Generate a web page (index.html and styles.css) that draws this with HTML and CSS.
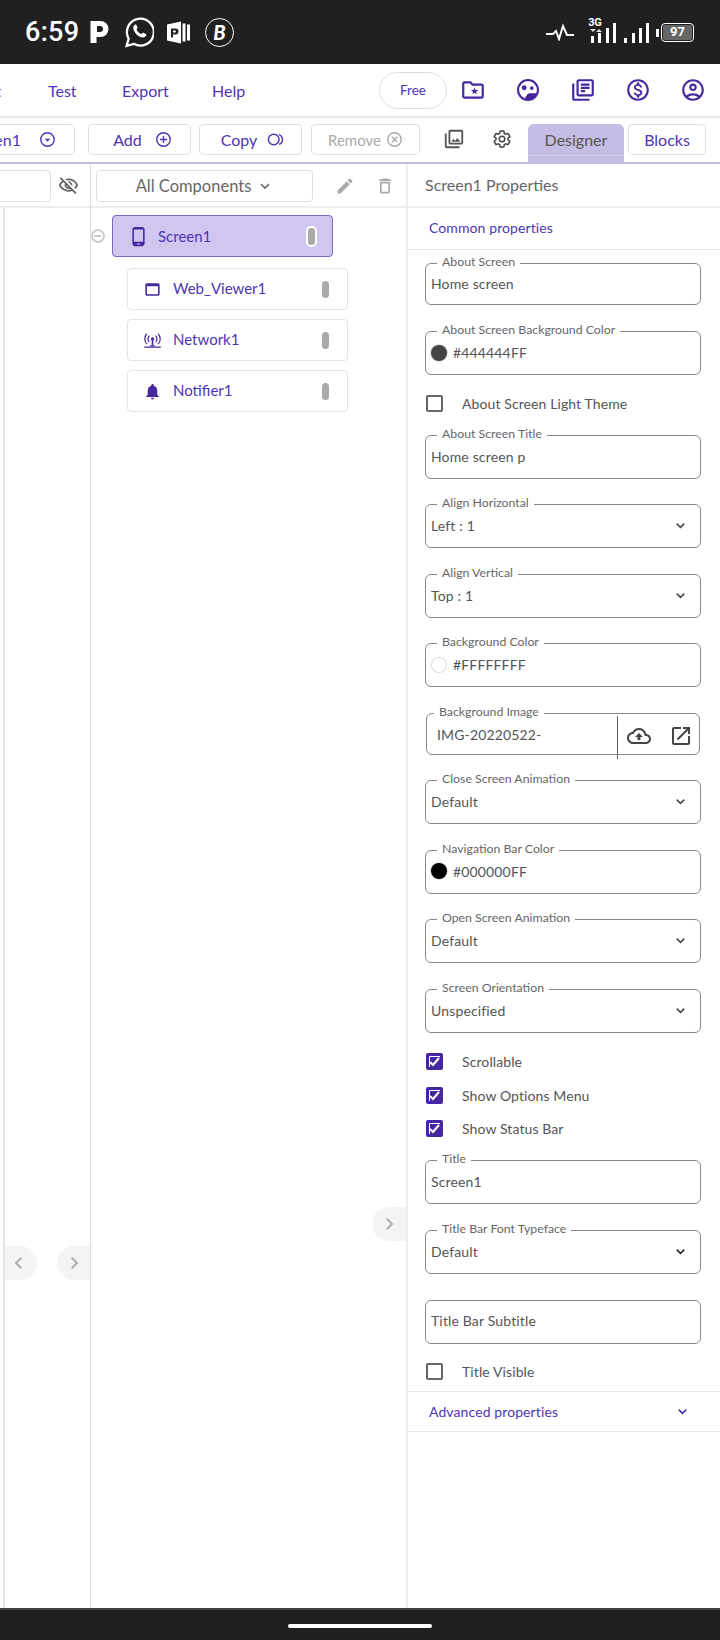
FILE: index.html
```html
<!DOCTYPE html>
<html lang="en">
<head>
<meta charset="utf-8">
<title>Screen1 Properties</title>
<link rel="stylesheet" href="styles.css">
</head>
<body>
<div class="statusbar">
  <span class="time">6:59</span>
  <svg class="st-p" viewBox="0 0 18 24"><path d="M0 2h10a8 8 0 0 1 0 16H6v6H0z M6.500 7v6h3a3 3 0 0 0 0-6z" fill-rule="evenodd"/></svg>
  <svg class="st-wa" viewBox="0 0 28 30"><path d="M1.500 28l2-7A13 13 0 1 1 8.500 26z" fill="none" stroke="#fff" stroke-width="2.200"/><path d="M9.500 7.500c-1.500 1-2 3-1 5.500 1.500 3 4 5.500 7 6.500 2.500.8 4.200 0 5-1.500.3-.7.2-1.200-.3-1.500l-2.500-1.300c-.5-.2-.8 0-1.200.5l-.7.9c-2-.7-4-2.700-4.800-4.700l.8-.8c.4-.4.4-.7.2-1.200l-1-2.200c-.3-.6-.9-.7-1.500-.2z" fill="#fff"/></svg>
  <svg class="st-ppt" viewBox="0 0 24 24"><path d="M0 4l14-3v22l-14-3z M4 8v9h2v-3h2.500a3 3 0 0 0 0-6z M6 10h2a1 1 0 0 1 0 2h-2z" fill-rule="evenodd"/><rect x="15.500" y="3" width="3" height="18"/><rect x="20" y="4" width="3" height="16"/></svg>
  <span class="st-b">B</span>
  <div class="st-right">
    <svg class="st-pulse" viewBox="0 0 28 16"><path d="M0 10h7l3-3 3 8 4-13 4 9h7" fill="none" stroke="#fff" stroke-width="2"/></svg>
    <div class="net">
      <span class="net-label">3G</span>
      <span class="net-arrows"></span>
      <span class="bars b1"><i></i><i></i><i></i><i></i></span>
    </div>
    <span class="bars b2"><i></i><i></i><i></i><i></i><i></i></span>
    <span class="battery">97</span>
  </div>
</div>

<nav class="menubar">
  <span class="menu-cut">Project</span>
  <span class="menu-item m-test">Test</span>
  <span class="menu-item m-export">Export</span>
  <span class="menu-item m-help">Help</span>
  <div class="menu-right">
    <span class="free">Free</span>
    <svg class="ico ico-top" viewBox="0 0 24 24"><path d="M20 6h-8l-2-2H4c-1.100 0-2 .9-2 2v12c0 1.100.9 2 2 2h16c1.100 0 2-.9 2-2V8c0-1.100-.9-2-2-2zm0 12H4V6h5.170l2 2H20v10zm-6.500-8.500l-.9 2.400-2.500.1 2 1.500-.7 2.500 2.100-1.400 2.100 1.400-.7-2.500 2-1.500-2.500-.1z"/></svg>
    <svg class="ico ico-top" viewBox="0 0 24 24"><circle cx="12" cy="12" r="9.200" fill="none" stroke="currentColor" stroke-width="1.900"/><circle cx="8.500" cy="10" r="2.300"/><circle cx="15.500" cy="10.200" r="1.700"/><path d="M9 20.500c1-3 2.500-5.500 5-5.500h6.500c-1.500 3.500-4.500 6-8.500 6-1 0-2-.2-2.500-.5z"/></svg>
    <svg class="ico ico-top" viewBox="0 0 24 24"><path d="M4 6H2v14c0 1.100.9 2 2 2h14v-2H4V6zm16-4H8c-1.100 0-2 .9-2 2v12c0 1.100.9 2 2 2h12c1.100 0 2-.9 2-2V4c0-1.100-.9-2-2-2zm0 14H8V4h12v12zM10 9h8v2h-8zm0 3h4v2h-4zm0-6h8v2h-8z"/></svg>
    <svg class="ico ico-top" viewBox="0 0 24 24"><path d="M12 2C6.480 2 2 6.480 2 12s4.480 10 10 10 10-4.480 10-10S17.520 2 12 2zm0 18c-4.410 0-8-3.590-8-8s3.590-8 8-8 8 3.590 8 8-3.590 8-8 8zm.310-8.860c-1.770-.45-2.340-.94-2.340-1.670 0-.84.790-1.430 2.100-1.430 1.380 0 1.900.66 1.940 1.640h1.710c-.05-1.340-.87-2.570-2.490-2.970V5H10.900v1.690c-1.510.32-2.720 1.300-2.720 2.810 0 1.790 1.490 2.690 3.660 3.210 1.950.46 2.340 1.150 2.340 1.870 0 .53-.39 1.390-2.100 1.390-1.600 0-2.230-.72-2.320-1.640H8.040c.1 1.700 1.360 2.660 2.860 2.970V19h2.340v-1.670c1.520-.29 2.720-1.160 2.730-2.770-.01-2.200-1.900-2.960-3.660-3.420z"/></svg>
    <svg class="ico ico-top" viewBox="0 0 24 24"><path d="M12 2C6.480 2 2 6.480 2 12s4.480 10 10 10 10-4.480 10-10S17.520 2 12 2zM7.350 18.500C8.660 17.560 10.260 17 12 17s3.340.56 4.650 1.500c-1.310.94-2.910 1.500-4.650 1.500s-3.340-.56-4.650-1.500zm10.790-1.380C16.450 15.800 14.320 15 12 15s-4.450.8-6.140 2.120C4.700 15.730 4 13.950 4 12c0-4.420 3.580-8 8-8s8 3.580 8 8c0 1.950-.7 3.730-1.860 5.120zM12 6c-1.930 0-3.500 1.570-3.500 3.500S10.070 13 12 13s3.500-1.570 3.500-3.500S13.930 6 12 6zm0 5c-.83 0-1.500-.67-1.500-1.500S11.170 8 12 8s1.500.67 1.500 1.500S12.830 11 12 11z"/></svg>
  </div>
</nav>

<div class="toolbar">
  <span class="btn btn-screen">Screen1
    <svg class="ico ico-btn" viewBox="0 0 24 24"><circle cx="12" cy="12" r="9.500" fill="none" stroke="currentColor" stroke-width="2"/><path d="M8 11h8l-4 4z"/></svg>
  </span>
  <span class="btn btn-add">Add
    <svg class="ico ico-btn" viewBox="0 0 24 24"><circle cx="12" cy="12" r="9.500" fill="none" stroke="currentColor" stroke-width="2"/><path d="M11 7h2v4h4v2h-4v4h-2v-4H7v-2h4z"/></svg>
  </span>
  <span class="btn btn-copy">Copy
    <svg class="ico ico-btn" viewBox="0 0 24 24"><circle cx="9.500" cy="12" r="7.500" fill="none" stroke="currentColor" stroke-width="2"/><path d="M17 5a7.500 7.500 0 0 1 0 14" fill="none" stroke="currentColor" stroke-width="2"/></svg>
  </span>
  <span class="btn btn-remove">Remove
    <svg class="ico ico-btn" viewBox="0 0 24 24"><circle cx="12" cy="12" r="9.500" fill="none" stroke="currentColor" stroke-width="2"/><path d="M8 8l8 8M16 8l-8 8" fill="none" stroke="currentColor" stroke-width="2"/></svg>
  </span>
  <svg class="ico ico-tool" viewBox="0 0 24 24"><path d="M20 4v12H8V4h12m0-2H8c-1.100 0-2 .9-2 2v12c0 1.100.9 2 2 2h12c1.100 0 2-.9 2-2V4c0-1.100-.9-2-2-2zm-8.500 9.670l1.690 2.260 2.480-3.100L19 15H9zM2 6v14c0 1.100.9 2 2 2h14v-2H4V6H2z"/></svg>
  <svg class="ico ico-gear" viewBox="0 0 24 24"><path d="M19.140 12.940c.04-.3.06-.61.06-.94 0-.32-.02-.64-.07-.94l2.030-1.580c.18-.14.23-.41.12-.61l-1.920-3.320c-.12-.22-.37-.29-.59-.22l-2.390.96c-.5-.38-1.030-.7-1.620-.94l-.36-2.540c-.04-.24-.24-.41-.48-.41h-3.840c-.24 0-.43.17-.47.41l-.36 2.540c-.59.24-1.130.57-1.620.94l-2.390-.96c-.22-.08-.47 0-.59.22L2.740 8.870c-.12.21-.08.47.12.61l2.030 1.580c-.05.3-.09.63-.09.94s.02.64.07.94l-2.030 1.580c-.18.14-.23.41-.12.61l1.920 3.320c.12.22.37.29.59.22l2.390-.96c.5.38 1.030.7 1.620.94l.36 2.540c.05.24.24.41.48.41h3.840c.24 0 .44-.17.47-.41l.36-2.540c.59-.24 1.130-.56 1.620-.94l2.390.96c.22.08.47 0 .59-.22l1.920-3.320c.12-.22.07-.47-.12-.61l-2.010-1.580z"/><circle cx="12" cy="12" r="3.300"/></svg>
  <span class="tab tab-on">Designer</span>
  <span class="tab tab-off">Blocks</span>
</div>

<main class="main">
  <section class="viewer">
    <div class="viewer-head">
      <span class="search"></span>
      <svg class="ico ico-eye" viewBox="0 0 24 24"><path d="M12 6c3.790 0 7.170 2.130 8.820 5.500-.59 1.220-1.420 2.270-2.410 3.120l1.410 1.410c1.390-1.230 2.490-2.770 3.180-4.530C21.270 7.110 17 4 12 4c-1.270 0-2.490.2-3.640.57l1.650 1.650C10.660 6.090 11.320 6 12 6zm-1.070 1.140L13 9.210c.57.25 1.030.71 1.280 1.280l2.070 2.070c.08-.34.14-.7.14-1.070C16.500 9.010 14.480 7 12 7c-.37 0-.72.05-1.070.14zM2.010 3.870l2.680 2.680C3.060 7.830 1.770 9.530 1 11.500 2.730 15.890 7 19 12 19c1.520 0 2.980-.29 4.320-.82l3.420 3.420 1.410-1.410L3.420 2.450 2.010 3.870zm7.500 7.500l2.610 2.610c-.04.01-.08.02-.12.02-1.380 0-2.500-1.120-2.500-2.500 0-.05.01-.08.01-.13zm-3.400-3.400l1.750 1.750c-.23.55-.36 1.150-.36 1.780 0 2.480 2.020 4.500 4.500 4.500.63 0 1.230-.13 1.770-.36l.98.98c-.88.24-1.800.38-2.750.38-3.790 0-7.170-2.130-8.820-5.500.7-1.430 1.720-2.610 2.930-3.530z"/></svg>
    </div>
    <div class="viewer-body">
      <span class="pager pager-l"><svg viewBox="0 0 24 24"><path d="M15 5l-7 7 7 7" fill="none" stroke="currentColor" stroke-width="2.400"/></svg></span>
      <span class="pager pager-r"><svg viewBox="0 0 24 24"><path d="M9 5l7 7-7 7" fill="none" stroke="currentColor" stroke-width="2.400"/></svg></span>
    </div>
  </section>

  <section class="tree">
    <div class="tree-head">
      <span class="filter">All Components
        <svg class="chev" viewBox="0 0 24 24"><path d="M6 9l6 6 6-6" fill="none" stroke="currentColor" stroke-width="2.400"/></svg>
      </span>
      <svg class="ico ico-edit" viewBox="0 0 24 24"><path d="M3 17.250V21h3.750L17.810 9.940l-3.750-3.750L3 17.250zM20.710 7.040c.39-.39.39-1.020 0-1.410l-2.340-2.340c-.39-.39-1.020-.39-1.410 0l-1.830 1.830 3.750 3.750 1.830-1.830z"/></svg>
      <svg class="ico ico-trash" viewBox="0 0 24 24"><path d="M6 19c0 1.100.9 2 2 2h8c1.100 0 2-.9 2-2V7H6v12zM8 9h8v10H8V9zm7.500-5l-1-1h-5l-1 1H5v2h14V4z"/></svg>
    </div>
    <div class="tree-root">
      <span class="toggle"></span>
      <div class="node node-on">
        <svg class="ico ico-node" viewBox="0 0 24 24"><path d="M16 1H8C6.340 1 5 2.340 5 4v16c0 1.660 1.340 3 3 3h8c1.660 0 3-1.340 3-3V4c0-1.660-1.340-3-3-3zm-2 20h-4v-1h4v1zm3.250-3H6.750V4h10.500v14z"/></svg>
        <span class="node-name">Screen1</span>
        <span class="handle handle-on"></span>
      </div>
    </div>
    <div class="tree-kids">
      <div class="node">
        <svg class="ico ico-node" viewBox="0 0 24 24"><path d="M19 4H5c-1.110 0-2 .9-2 2v12c0 1.100.89 2 2 2h14c1.100 0 2-.9 2-2V6c0-1.100-.89-2-2-2zm0 14H5V8h14v10z"/></svg>
        <span class="node-name">Web_Viewer1</span>
        <span class="handle"></span>
      </div>
      <div class="node">
        <svg class="ico ico-node" viewBox="0 0 24 24"><circle cx="12" cy="10" r="2"/><path d="M8 14a5.500 5.500 0 0 1 0-8M16 6a5.500 5.500 0 0 1 0 8M5 16.500a9 9 0 0 1 0-13M19 3.500a9 9 0 0 1 0 13" fill="none" stroke="currentColor" stroke-width="1.500"/><path d="M11 11h2v7h-2zM1.500 19.500h21v1.800h-21z"/><path d="M9 18h6v1.500H9z"/></svg>
        <span class="node-name">Network1</span>
        <span class="handle"></span>
      </div>
      <div class="node">
        <svg class="ico ico-node" viewBox="0 0 24 24"><path d="M12 22c1.100 0 2-.9 2-2h-4c0 1.100.9 2 2 2zm6-6v-5c0-3.070-1.630-5.640-4.500-6.320V4c0-.83-.67-1.500-1.500-1.500s-1.500.67-1.500 1.500v.68C7.640 5.360 6 7.920 6 11v5l-2 2v1h16v-1l-2-2z"/></svg>
        <span class="node-name">Notifier1</span>
        <span class="handle"></span>
      </div>
    </div>
    <span class="pager pager-tree"><svg viewBox="0 0 24 24"><path d="M9 5l7 7-7 7" fill="none" stroke="currentColor" stroke-width="2.400"/></svg></span>
  </section>

  <aside class="props">
    <div class="props-head">Screen1 Properties</div>
    <div class="group-head">Common properties</div>
    <div class="fields">
      <fieldset class="field field-short"><legend>About Screen</legend><span class="val">Home screen</span></fieldset>
      <fieldset class="field field-second"><legend>About Screen Background Color</legend><span class="dot dot-dark"></span><span class="val">#444444FF</span></fieldset>
      <label class="check-row"><span class="box"></span>About Screen Light Theme</label>
      <fieldset class="field after-check"><legend>About Screen Title</legend><span class="val">Home screen p</span></fieldset>
      <fieldset class="field"><legend>Align Horizontal</legend><span class="val">Left : 1</span><svg class="chev chev-field" viewBox="0 0 24 24"><path d="M6 9l6 6 6-6" fill="none" stroke="currentColor" stroke-width="2.400"/></svg></fieldset>
      <fieldset class="field"><legend>Align Vertical</legend><span class="val">Top : 1</span><svg class="chev chev-field" viewBox="0 0 24 24"><path d="M6 9l6 6 6-6" fill="none" stroke="currentColor" stroke-width="2.400"/></svg></fieldset>
      <fieldset class="field"><legend>Background Color</legend><span class="dot dot-light"></span><span class="val">#FFFFFFFF</span></fieldset>
      <fieldset class="field field-image"><legend>Background Image</legend><span class="val val-image">IMG-20220522-</span>
        <span class="image-actions">
          <svg class="ico ico-action" viewBox="0 0 24 24"><path d="M19.350 10.040C18.670 6.590 15.640 4 12 4 9.110 4 6.600 5.640 5.350 8.040 2.340 8.360 0 10.910 0 14c0 3.310 2.690 6 6 6h13c2.760 0 5-2.240 5-5 0-2.640-2.050-4.780-4.650-4.960zM19 18H6c-2.210 0-4-1.790-4-4 0-2.050 1.530-3.760 3.560-3.970l1.070-.11.5-.95C8.080 7.140 9.940 6 12 6c2.620 0 4.880 1.860 5.390 4.430l.3 1.500 1.530.11c1.560.1 2.780 1.410 2.780 2.960 0 1.650-1.350 3-3 3zM8 13h2.550v3h2.900v-3H16l-4-4z"/></svg>
          <svg class="ico ico-action" viewBox="0 0 24 24"><path d="M19 19H5V5h7V3H5c-1.110 0-2 .9-2 2v14c0 1.100.89 2 2 2h14c1.100 0 2-.9 2-2v-7h-2v7zM14 3v2h3.590l-9.830 9.830 1.410 1.410L19 6.410V10h2V3h-7z"/></svg>
        </span>
      </fieldset>
      <fieldset class="field"><legend>Close Screen Animation</legend><span class="val">Default</span><svg class="chev chev-field" viewBox="0 0 24 24"><path d="M6 9l6 6 6-6" fill="none" stroke="currentColor" stroke-width="2.400"/></svg></fieldset>
      <fieldset class="field"><legend>Navigation Bar Color</legend><span class="dot dot-black"></span><span class="val">#000000FF</span></fieldset>
      <fieldset class="field"><legend>Open Screen Animation</legend><span class="val">Default</span><svg class="chev chev-field" viewBox="0 0 24 24"><path d="M6 9l6 6 6-6" fill="none" stroke="currentColor" stroke-width="2.400"/></svg></fieldset>
      <fieldset class="field"><legend>Screen Orientation</legend><span class="val">Unspecified</span><svg class="chev chev-field" viewBox="0 0 24 24"><path d="M6 9l6 6 6-6" fill="none" stroke="currentColor" stroke-width="2.400"/></svg></fieldset>
      <label class="check-row row-first"><span class="box box-on"><svg viewBox="0 0 17 17"><path d="M3.500 14V3.500H14" fill="none" stroke="#fff" stroke-width="1"/><path d="M4 9l3 3 6-7" fill="none" stroke="#fff" stroke-width="2"/></svg></span>Scrollable</label>
      <label class="check-row row-options"><span class="box box-on"><svg viewBox="0 0 17 17"><path d="M3.500 14V3.500H14" fill="none" stroke="#fff" stroke-width="1"/><path d="M4 9l3 3 6-7" fill="none" stroke="#fff" stroke-width="2"/></svg></span>Show Options Menu</label>
      <label class="check-row row-status"><span class="box box-on"><svg viewBox="0 0 17 17"><path d="M3.500 14V3.500H14" fill="none" stroke="#fff" stroke-width="1"/><path d="M4 9l3 3 6-7" fill="none" stroke="#fff" stroke-width="2"/></svg></span>Show Status Bar</label>
      <fieldset class="field after-status"><legend>Title</legend><span class="val">Screen1</span></fieldset>
      <fieldset class="field"><legend>Title Bar Font Typeface</legend><span class="val">Default</span><svg class="chev chev-field chev-dark" viewBox="0 0 24 24"><path d="M6 9l6 6 6-6" fill="none" stroke="currentColor" stroke-width="2.400"/></svg></fieldset>
      <div class="field-plain"><span class="val">Title Bar Subtitle</span></div>
      <label class="check-row row-last"><span class="box"></span>Title Visible</label>
    </div>
    <div class="group-foot"><span>Advanced properties</span><svg class="chev chev-group" viewBox="0 0 24 24"><path d="M6 9l6 6 6-6" fill="none" stroke="currentColor" stroke-width="2.400"/></svg></div>
  </aside>
</main>

<div class="navbar"><span class="home"></span></div>
</body>
</html>
```
FILE: styles.css
```css
* { box-sizing: border-box; }
html, body { margin: 0; padding: 0; }
body {
  width: 720px; height: 1640px; overflow: hidden; background: #fff;
  font-family: "Lato", "Open Sans", sans-serif; color: #555;
  display: flex; flex-direction: column;
}
.ico { fill: currentColor; display: block; flex: none; }

/* status bar */
.statusbar { height: 64px; background: #202020; color: #fff; display: flex; align-items: center; padding-left: 25px; flex: none; }
.time { font-family: "Roboto", sans-serif; font-weight: 500; font-size: 27px; width: 65px; letter-spacing: .3px; }
.statusbar svg { fill: #fff; flex: none; }
.st-p { width: 19px; height: 24px; margin-right: 16px; margin-top: -2px; }
.st-wa { width: 29px; height: 31px; margin-right: 13px; margin-top: 1px; }
.st-ppt { width: 24px; height: 25px; margin-right: 14px; }
.st-b { width: 29px; height: 29px; border: 1.500px solid #fff; border-radius: 50%; display: flex; align-items: center; justify-content: center; font: italic 900 20px "Lato", sans-serif; }
.st-right { margin-left: auto; display: flex; align-items: center; padding-right: 26px; }
.st-pulse { width: 28px; height: 18px; margin-right: 14px; margin-top: -1px; }
.net { position: relative; width: 28px; height: 26px; margin: -4px 8px 0 0; display: flex; align-items: flex-end; justify-content: flex-end; }
.net-label { position: absolute; left: 0; top: -1px; font: 700 11px "Roboto", sans-serif; letter-spacing: -.3px; }
.net-arrows { position: absolute; left: 2px; top: 12px; width: 0; height: 0; border-left: 3px solid transparent; border-right: 3px solid transparent; border-top: 3px solid #ddd; }
.net-arrows::after { content: ""; position: absolute; left: 3px; top: -3px; width: 0; height: 0; border-left: 3px solid transparent; border-right: 3px solid transparent; border-bottom: 3px solid #ddd; }
.bars { display: flex; align-items: flex-end; gap: 4.500px; height: 20px; }
.bars i { display: block; width: 3px; background: #fff; }
.b1 i:nth-child(1) { height: 7px; }
.b1 i:nth-child(2) { height: 10px; }
.b1 i:nth-child(3) { height: 15px; }
.b1 i:nth-child(4) { height: 20px; }
.b2 { gap: 4.300px; margin: 2px 1px 0 0; }
.b2 i:nth-child(1) { height: 5px; }
.b2 i:nth-child(2) { height: 10px; }
.b2 i:nth-child(3) { height: 15px; }
.b2 i:nth-child(4) { height: 20px; }
.b2 i:nth-child(5) { height: 8px; margin-bottom: 6px; margin-left: 2.500px; }
.battery { width: 33px; height: 19px; border: 1.500px solid #fff; border-radius: 4px; background: linear-gradient(#666, #666) content-box; padding: 1px; font: 700 13px/14px "Roboto", sans-serif; text-align: center; margin-left: 1px; }

/* menu bar */
.menubar { height: 54px; flex: none; display: flex; align-items: center; border-bottom: 2px solid #e8e8e8; padding-right: 14px; color: #4f35b5; font-size: 16px; overflow: hidden; }
.menu-cut { margin-left: -51px; width: 52px; text-align: right; white-space: nowrap; flex: none; }
.menu-item { flex: none; }
.m-test { margin-left: 47px; width: 74px; }
.m-export { width: 90px; }
.menu-right { margin-left: auto; display: flex; align-items: center; gap: 29px; color: #4527a0; }
.free { width: 68px; height: 37px; border: 1px solid #ddd; border-radius: 19px; display: flex; align-items: center; justify-content: center; font-size: 13.500px; color: #4f35b5; margin-right: -16px; }
.ico-top { width: 26px; height: 26px; }

/* toolbar */
.toolbar { height: 46px; flex: none; display: flex; align-items: flex-start; padding-top: 6px; border-bottom: 2px solid #c5bde3; overflow: hidden; font-size: 16px; }
.btn { height: 31px; border: 1px solid #e0e0e0; border-radius: 4px; display: flex; align-items: center; justify-content: center; gap: 12px; color: #4f35b5; flex: none; }
.ico-btn { width: 17px; height: 17px; }
.btn-screen { width: 98px; margin-left: -23px; margin-right: 13px; justify-content: flex-end; padding-right: 18px; gap: 18px; }
.btn-add { width: 103px; margin-right: 8px; gap: 13px; padding-left: 6px; }
.btn-copy { width: 103px; margin-right: 9px; gap: 10px; padding-left: 4px; }
.btn-remove { width: 109px; color: #aaa; gap: 5px; font-size: 15px; }
.ico-tool { width: 22px; height: 22px; color: #555; margin: 4px 0 0 23px; }
.ico-gear { width: 20px; height: 20px; margin: 5px 0 0 27px; color: #fff; stroke: #444; stroke-width: 1.800; }
.tab { flex: none; display: flex; align-items: center; justify-content: center; }
.tab-on { width: 96px; height: 38px; margin: 0 0 0 16px; padding-bottom: 7px; color: #555; border-radius: 6px 6px 0 0; background: linear-gradient(#c5bde3 31px, #d2cbe9 31px, #d2cbe9 32px, #c5bde3 32px); }
.tab-off { width: 78px; height: 31px; margin-left: 4px; border: 1px solid #e0e0e0; border-radius: 4px; color: #4f35b5; }

/* main */
.main { flex: none; height: 1444px; display: flex; }
.viewer { width: 91px; flex: none; border-right: 1px solid #ddd; display: flex; flex-direction: column; overflow: hidden; }
.viewer-head { height: 44px; flex: none; border-bottom: 2px solid #eee; display: flex; align-items: center; padding-top: 1px; }
.search { width: 61px; height: 32px; margin-left: -10px; border: 1px solid #e0e0e0; border-radius: 4px; flex: none; }
.ico-eye { width: 21px; height: 21px; color: #666; margin-left: 7px; }
.viewer-body { flex: 1; margin-left: 3px; border-left: 2px solid #e4e4e4; padding-top: 1038px; display: flex; gap: 20px; }
.pager { display: flex; align-items: center; justify-content: center; background: #f4f4f4; color: #aaa; flex: none; width: 32px; height: 34px; }
.pager svg { width: 18px; height: 18px; display: block; }
.pager-l { border-radius: 0 17px 17px 0; padding-right: 4px; }
.pager-r { border-radius: 17px 0 0 17px; width: 33px; }
.pager-tree { position: absolute; right: 0; top: 1043px; width: 34px; border-radius: 17px 0 0 17px; }

/* component tree */
.tree { position: relative; width: 317px; flex: none; border-right: 2px solid #eee; }
.tree-head { height: 44px; border-bottom: 2px solid #eee; display: flex; align-items: center; padding: 1px 0 0 5px; }
.filter { width: 217px; height: 32px; border: 1px solid #e0e0e0; border-radius: 4px; display: flex; align-items: center; justify-content: center; gap: 6px; font-size: 16.500px; color: #666; }
.chev { width: 16px; height: 16px; display: block; flex: none; }
.ico-edit { width: 20px; height: 20px; color: #aaa; margin-left: 22px; }
.ico-trash { width: 20px; height: 20px; color: #aaa; margin-left: 20px; }
.tree-root { display: flex; align-items: center; margin-top: 7px; }
.toggle { width: 14px; height: 14px; border: 2px solid #ccc; border-radius: 50%; margin: 0 7.500px 0 -.5px; flex: none; display: flex; align-items: center; justify-content: center; }
.toggle::after { content: ""; width: 7px; height: 2px; background: #ccc; }
.node { width: 221px; height: 42px; border: 1px solid #e4e4e4; border-radius: 4px; display: flex; align-items: center; padding: 0 18px 2px 15px; color: #4f35b5; font-size: 15px; background: #fff; }
.node-on { background: #d0c6f0; border-color: #7b68c8; padding-bottom: 0; }
.ico-node { width: 19px; height: 19px; color: #4527a0; margin-top: 2px; }
.node-on .ico-node { width: 21px; height: 21px; margin-top: 0; }
.node-name { margin-left: 11px; flex: 1; }
.node-on .node-name { margin-left: 9px; }
.handle { width: 7px; height: 17px; border-radius: 4px; background: #aaa; flex: none; margin-top: 2px; }
.handle-on { width: 11px; height: 21px; background: #aaa; border: 2px solid #fff; border-radius: 5px; margin-right: -3px; margin-top: 0; }
.tree-kids { margin: 11px 0 0 36px; display: flex; flex-direction: column; gap: 9px; }

/* properties */
.props { flex: 1; min-width: 0; }
.props-head { height: 44px; border-bottom: 2px solid #eee; padding: 0 0 2px 17px; display: flex; align-items: center; font-size: 16px; color: #666; }
.group-head { height: 42px; border-bottom: 1px solid #e8e8e8; padding: 0 0 2px 21px; display: flex; align-items: center; font-size: 14px; letter-spacing: .1px; color: #4f35b5; }
.fields { padding: 6px 19px 0 17px; }
.field { margin: 18.500px 0 0; padding: 0 5px 8px 5px; border: 1px solid #888; border-radius: 6px; height: 51px; min-width: 0; display: flex; align-items: center; font-size: 14px; color: #555; }
.fields > .field:first-child { margin-top: 0; height: 49px; }
.field-second { margin-top: 19px; }
.field legend { margin-left: 6px; padding: 0 5px 4px; font-size: 12.300px; line-height: 11px; color: #666; }
.val { flex: 1; font-size: 14px; letter-spacing: .15px; white-space: nowrap; }
.after-check { margin-top: 16px; }
.after-status { margin-top: 16px; }
.dot { width: 16px; height: 16px; border-radius: 50%; margin-right: 6px; margin-left: 0; flex: none; }
.dot-dark { background: #444; box-shadow: 0 0 0 1px #ddd; }
.dot-light { background: #fff; box-shadow: inset 0 0 0 1px #ddd; }
.dot-black { background: #000; box-shadow: 0 0 0 1px #ddd; }
.chev-field { width: 15px; height: 15px; color: #444; margin-right: 7px; }
.chev-dark { color: #222; }
.field-image { margin-left: 1px; margin-right: 1px; height: 49px; padding: 0 0 6px 10px; }
.field-image legend { margin-left: -3px; }
.image-actions { width: 82px; height: 43px; margin-top: 0; margin-bottom: -7px; border-left: 1px solid #666; display: flex; align-items: center; justify-content: space-between; padding: 0 6px 4px 9px; }
.ico-action { width: 24px; height: 24px; color: #444; }
.field-plain { margin-top: 26px; height: 44px; border: 1px solid #888; border-radius: 6px; padding: 0 5px 2px 5px; display: flex; align-items: center; }
.check-row { display: flex; align-items: center; height: 17px; margin-top: 19.500px; font-size: 14px; letter-spacing: .1px; color: #555; }
.row-first { margin-top: 20px; }
.row-options { margin-top: 17.500px; }
.row-status { margin-top: 16px; }
.row-last { margin-top: 19px; }
.box { width: 17px; height: 17px; border: 2px solid #666; border-radius: 2px; margin: 0 19px 0 1px; flex: none; }
.box-on { background: #4527a0; border: 0; }
.box-on svg { width: 17px; height: 17px; display: block; }
.group-foot { margin-top: 11px; height: 41px; border-top: 1px solid #e8e8e8; border-bottom: 1px solid #e8e8e8; padding: 0 30px 0 21px; display: flex; align-items: center; justify-content: space-between; font-size: 14px; letter-spacing: .1px; color: #4f35b5; }
.chev-group { width: 15px; height: 15px; color: #4527a0; }

/* nav */
.navbar { flex: none; height: 32px; background: #202020; border-top: 2px solid #444; display: flex; justify-content: center; padding-top: 14px; }
.home { width: 144px; height: 4px; border-radius: 2px; background: #fff; display: block; }
```
